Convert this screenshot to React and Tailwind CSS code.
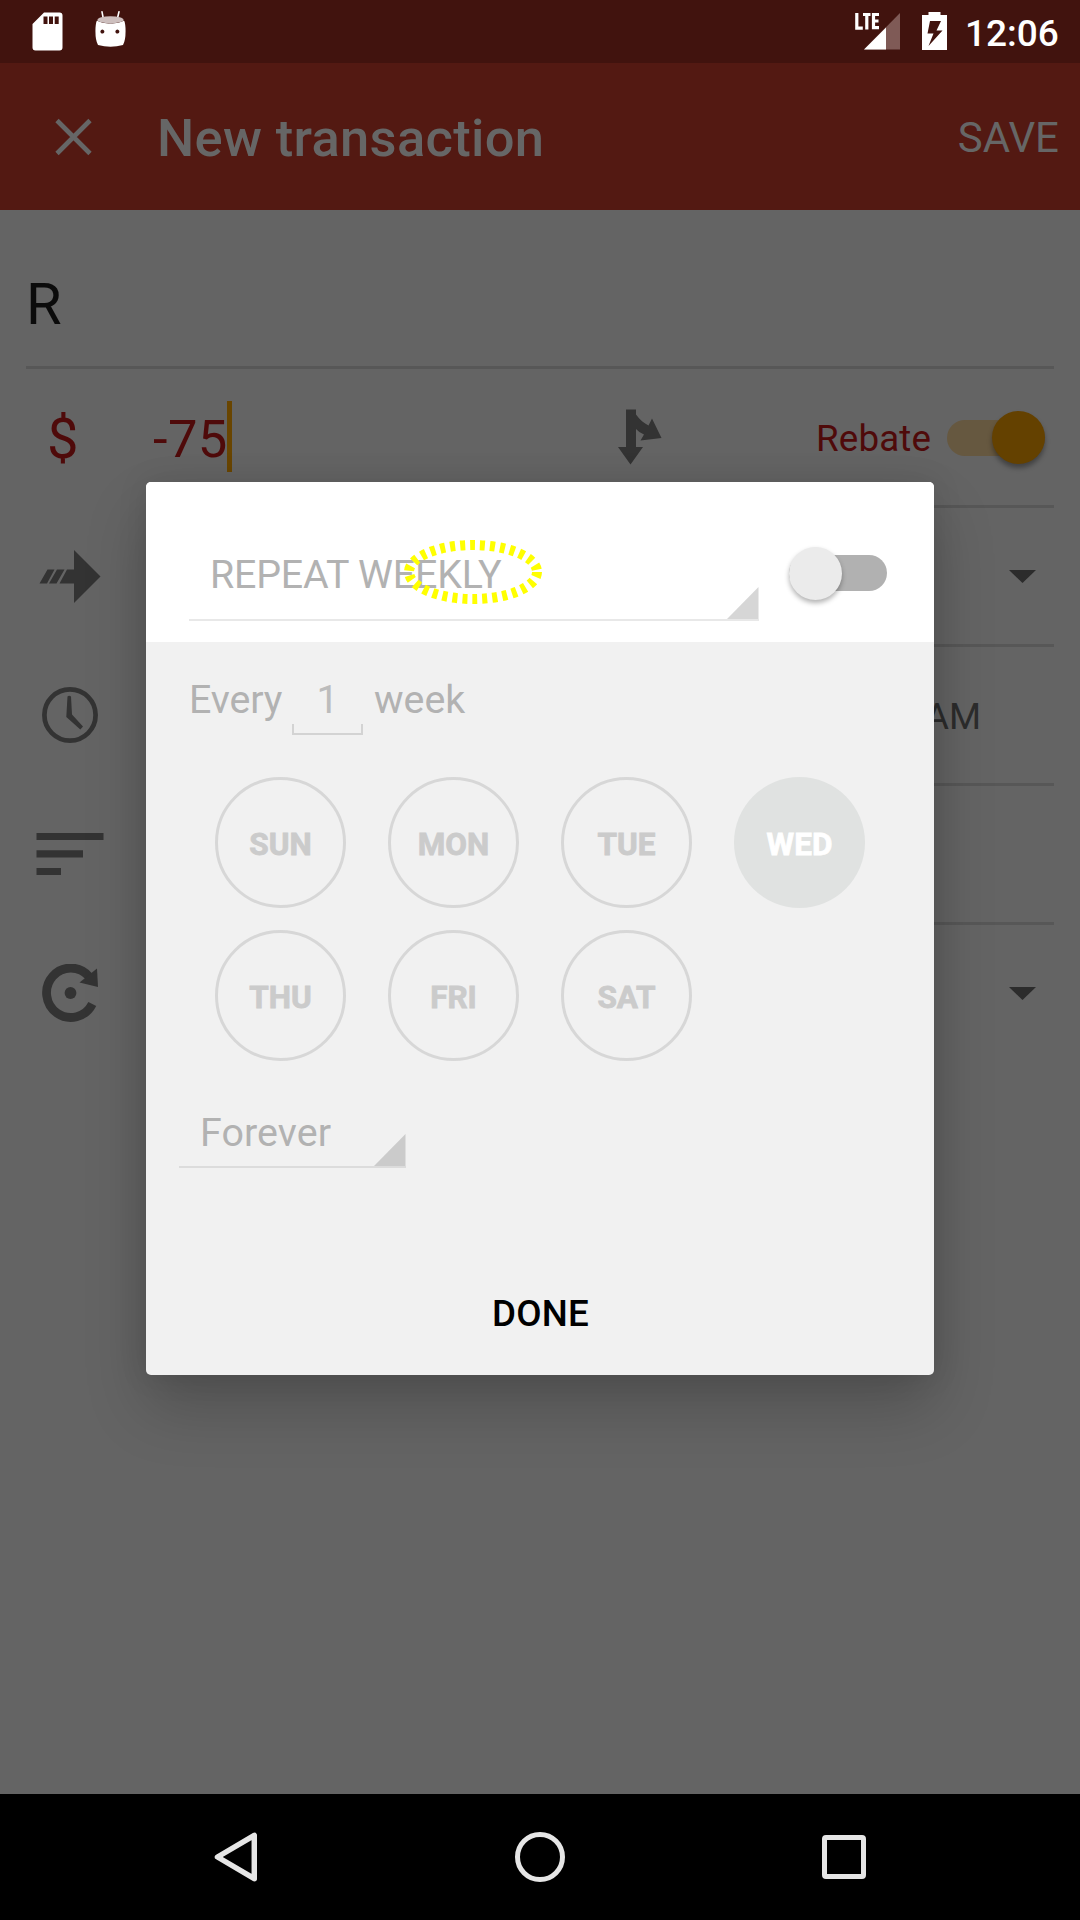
import React from "react";

function StatusBar() {
  return (
    <div className="flex h-[63px] items-start bg-[#41130e] text-white">
      <svg className="ml-8 mt-3" width="31" height="39" viewBox="0 0 31 39" fill="currentColor">
        <path
          fillRule="evenodd"
          d="M12 .5H27.500a3 3 0 0 1 3 3V35.500a3 3 0 0 1-3 3H3.500a3 3 0 0 1-3-3V12zM11.500 4.500v7.500h4v-7.500zM17 4.500v7.500h4v-7.500zM22.700 4.500v7.500h4v-7.500z"
        />
      </svg>
      <svg className="ml-8 mt-[11px]" width="31" height="37" viewBox="0 0 31 37" fill="currentColor">
        <path d="M7 .8 8.200 7M24 .8 22.500 7" stroke="currentColor" strokeWidth="1.600" strokeLinecap="round" />
        <path
          fillRule="evenodd"
          d="M2.300 9.500C7 13.500 24 13.500 28.700 9.500Q30 9.800 30.500 17 31 29 28 34 15.500 37.500 3 34 0 29 .5 17 1 9.800 2.300 9.500zM8 18.700a2 2 0 1 0 0 3.800 2 2 0 0 0 0-3.800zM23 18.700a2 2 0 1 0 0 3.800 2 2 0 0 0 0-3.800z"
        />
        <ellipse cx="15.500" cy="8.800" rx="13" ry="3.600" fill="#cdbfbe" />
      </svg>
      <div className="ml-[729px] mt-3 flex h-[38px] w-[45px]">
        <svg width="45" height="38" viewBox="0 0 45 38">
          <path d="M9 37.500 45 1v36.500z" fill="#7f5a56" />
          <path d="M9 37.500 31 15.500v22z" fill="#fff" />
          <path d="M1.800 1v15.200h6M8 2.500h7.500M11.800 2.500v15M24 2.500h-5.500v13.200h5.500M18.500 9h5" stroke="#fff" strokeWidth="3.200" fill="none" />
        </svg>
      </div>
      <svg className="ml-[22px] mt-3" width="25" height="38" viewBox="0 0 25 38" fill="currentColor">
        <path fillRule="evenodd" d="M6.500 0h12v3H25v35H0V3h6.500zM8 9 5.500 21.500h6L6.500 34 20.500 18.500h-6L19 9z" />
      </svg>
      <span className="ml-[18px] mt-[10px] text-[37px] font-medium leading-[48px]">12:06</span>
    </div>
  );
}

function Header() {
  return (
    <header className="flex h-[147px] items-center bg-[#531912] text-[#666]">
      <svg className="ml-[55px]" width="38" height="38" viewBox="0 0 38 38">
        <path d="M2 2.500 35 35.500M35 2.500 2 35.500" stroke="currentColor" strokeWidth="4.600" />
      </svg>
      <h1 className="ml-16 mt-[3px] text-[52.500px] font-medium leading-[60px] tracking-[0.320px]">New transaction</h1>
      <span className="ml-auto mr-[21px] mt-[3px] text-[42px] leading-[50px]">SAVE</span>
    </header>
  );
}

function Caret() {
  return (
    <svg className="ml-auto mr-[18px]" width="27" height="13" viewBox="0 0 27 13">
      <path d="M0 0h27L13.500 13z" fill="#2c2c2c" />
    </svg>
  );
}

/* Icon cell on the left; the divider runs only below the content. */
function Row({ icon, children, last }) {
  return (
    <div className={last ? "flex h-[136px]" : "flex h-[139px]"}>
      <div className={last ? "flex w-[124px] items-center" : "flex w-[124px] items-center pb-[3px]"}>{icon}</div>
      <div className={last ? "flex flex-1 items-center" : "flex flex-1 items-center border-b-3 border-[#575757]"}>
        {children}
      </div>
    </div>
  );
}

function ArrowIcon() {
  return (
    <svg className="ml-[13px]" width="62" height="53" viewBox="0 0 62 53" fill="currentColor">
      <path d="M8.500 19.500h7L8 33.500H.5zM18 19.500h7.500L17.500 33.500H10zM28 19.500h7V0L61.500 26.500 35 53V33.500H20.500z" />
    </svg>
  );
}

function ClockIcon() {
  return (
    <svg className="ml-4" width="56" height="56" viewBox="0 0 56 56">
      <circle cx="28" cy="28" r="25.600" fill="none" stroke="currentColor" strokeWidth="4.700" />
      <path d="M25.500 9.500q1.700-1.600 3.500 0L30 27.500 41 39.500l-2.700 3L24.300 30z" fill="currentColor" />
    </svg>
  );
}

function LinesIcon() {
  return (
    <svg className="ml-[10px]" width="68" height="42" viewBox="0 0 68 42" fill="currentColor">
      <path d="M.5 0h67v7H.5zM.5 17.300H47v7.300H.5zM.5 35H25v7H.5z" />
    </svg>
  );
}

function RepeatIcon() {
  return (
    <svg className="ml-4" width="57" height="58" viewBox="0 0 57 58">
      <path d="M50.300 40A24.200 24.700 0 1 1 47 12.500" fill="none" stroke="currentColor" strokeWidth="8.800" />
      <path d="M55 4.500 56 23 37.500 18.500z" fill="currentColor" />
      <circle cx="28.500" cy="29" r="5.900" fill="currentColor" />
    </svg>
  );
}

function Form() {
  return (
    <main className="flex-1 bg-[#646464] pl-[26px] pr-[26px] text-[#333]">
      <div className="flex h-[159px] items-center border-b-3 border-[#575757]">
        <span className="mt-[31px] text-[57.750px] leading-[70px] text-[#0b0b0b]">R</span>
      </div>
      <Row icon={<span className="ml-[21px] mt-[3px] text-[56px] leading-[60px] text-[#4f0a0a]">$</span>}>
        <span className="ml-[3px] mt-[3px] w-[74px] text-[52.500px] leading-[60px] tracking-[0.400px] text-[#4f0a0a]">-75</span>
        <span className="mb-[2px] h-[71px] w-[5px] bg-[#694500]" />
        <svg className="ml-[386px] mb-px" width="44" height="56" viewBox="0 0 44 56">
          <path d="M8 .5h10v5C22 11 26 14 30.500 16.500L34 9.500 43.500 29 22.500 31.500 26 25.500Q21 23.500 18 20v18H25L12.500 55.500 0 38H8z" fill="#333" />
        </svg>
        <span className="ml-[154px] mt-[3px] w-[119px] text-[36.750px] leading-[44px] tracking-[0.150px] text-[#4f0a0a]">Rebate</span>
        <span className="ml-[12px] mt-[2px] flex h-9 w-[98px] items-center justify-end rounded-full bg-[#665840]">
          <span className="mb-[1px] h-[53px] w-[53px] shrink-0 rounded-full bg-[#644100] shadow-[0_4px_5px_rgba(0,0,0,0.35)]" />
        </span>
      </Row>
      <Row icon={<ArrowIcon />}>
        <Caret />
      </Row>
      <Row icon={<ClockIcon />}>
        <span className="ml-auto mr-[73px] mt-[3px] text-[36.750px] leading-[44px] text-[#2c2c2c]">AM</span>
      </Row>
      <Row icon={<LinesIcon />} />
      <Row icon={<RepeatIcon />} last>
        <Caret />
      </Row>
    </main>
  );
}

function Corner({ fill }) {
  return (
    <svg className="ml-auto" width="32" height="32" viewBox="0 0 32 32">
      <path d="M0 32 31.500 0v32z" fill={fill} />
    </svg>
  );
}

const days = ["SUN", "MON", "TUE", "WED", "THU", "FRI", "SAT"];

function Day({ name }) {
  return (
    <div
      className={
        name === "WED"
          ? "flex h-[131px] w-[131px] items-center justify-center rounded-full bg-[#e0e2e1] text-white"
          : "flex h-[131px] w-[131px] items-center justify-center rounded-full border-3 border-[#d7d7d7] text-[#cbcbcb]"
      }
    >
      <span className="mt-[5px] text-[31.500px] font-bold leading-[38px] [-webkit-text-stroke:0.800px_currentColor]">{name}</span>
    </div>
  );
}

function Dialog() {
  return (
    <section className="absolute left-[146px] top-[482px] flex h-[893px] w-[788px] flex-col overflow-hidden rounded-[5px] bg-[#f1f1f1] text-[39.375px] leading-[48px] text-[#b2b2b2]">
      <div className="flex h-[160px] shrink-0 bg-white pl-[43px]">
        <div className="mt-[67px] flex h-[72px] w-[570px] items-end border-b-[2px] border-[#e8e8e8]">
          <span className="mb-[20px] ml-[21px] whitespace-nowrap tracking-[-0.200px]">REPEAT WEEKLY</span>
          <Corner fill="#d6d6d6" />
        </div>
        <div className="ml-[30px] mt-[73px] flex h-9 w-[98px] items-center rounded-full bg-[#b1b1b1]">
          <span className="h-[53px] w-[53px] shrink-0 rounded-full bg-[#ebebeb] shadow-[0_3px_5px_rgba(0,0,0,0.3)]" />
        </div>
      </div>
      <div className="flex h-[93px] shrink-0 pl-[43px] pt-[34px]">
        <span className="w-[103px] tracking-[-0.100px]">Every</span>
        <div className="flex h-[59px] w-[71px] flex-col">
          <span className="h-[48px] text-center text-[#bcbcbc]">1</span>
          <span className="h-[11px] border-x-2 border-b-2 border-[#d3d3d3]" />
        </div>
        <span className="ml-[11px]">week</span>
      </div>
      <div className="ml-[69px] mt-[42px] grid grid-cols-[repeat(4,131px)] gap-x-[42px] gap-y-[22px]">
        {days.map((d) => (
          <Day key={d} name={d} />
        ))}
      </div>
      <div className="ml-[33px] mt-[34px] flex h-[73px] w-[227px] items-end border-b-2 border-[#dcdcdc]">
        <span className="mb-[9px] ml-[21px] tracking-[0.100px]">Forever</span>
        <Corner fill="#cbcbcb" />
      </div>
      <button className="mt-[122px] pl-px text-center text-[36.750px] font-medium leading-[48px] tracking-[0.200px] text-black">DONE</button>
    </section>
  );
}

function NavBar() {
  return (
    <nav className="flex h-[126px] items-center bg-black">
      <svg className="ml-[214px]" width="43" height="50" viewBox="0 0 43 50" fill="none">
        <path d="M40.300 3.300v43.400L3.500 25z" stroke="#e6e6e6" strokeWidth="5.500" strokeLinejoin="round" />
      </svg>
      <span className="ml-[258px] h-[50px] w-[50px] rounded-full border-[5px] border-[#e6e6e6]" />
      <span className="ml-[257px] h-[44px] w-[44px] rounded-[4px] border-[5px] border-[#e6e6e6]" />
    </nav>
  );
}

export default function App() {
  return (
    <div className="relative flex h-[1920px] w-[1080px] flex-col overflow-hidden bg-black font-[Roboto,sans-serif]">
      <StatusBar />
      <Header />
      <Form />
      <NavBar />
      <div className="absolute left-[146px] top-[482px] h-[893px] w-[788px] rounded-[5px] shadow-[0_32px_63px_rgba(0,0,0,0.2),0_0_30px_rgba(0,0,0,0.1)]" />
      <Dialog />
      <svg className="absolute left-[403px] top-[539px]" width="140" height="66" viewBox="0 0 140 66">
        <ellipse cx="70" cy="33" rx="64" ry="27" fill="none" stroke="#ff0" strokeWidth="10" strokeDasharray="5 5" />
      </svg>
    </div>
  );
}
